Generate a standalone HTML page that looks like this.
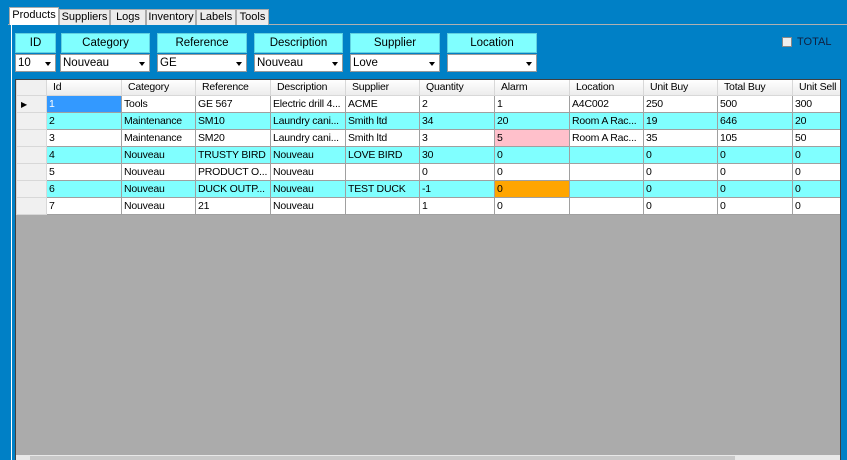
<!DOCTYPE html><html><head><style>
*{box-sizing:border-box;margin:0;padding:0}
body{width:847px;height:460px;background:#0080c6;font-family:"Liberation Sans",sans-serif;font-size:11px;position:relative;overflow:hidden;color:#000}
.a{position:absolute}
.tab{position:absolute;top:9px;height:16px;background:#ececec;border:1px solid #aaa;border-bottom:none;text-align:center;line-height:15px;font-size:11px}
.lbl{position:absolute;top:33px;height:20px;background:#80ffff;border:1px solid #60d0e0;text-align:center;line-height:19px;font-size:11.5px}
.cmb{position:absolute;top:54px;height:18px;background:#fff;border:1px solid #999;line-height:16px;padding-left:2px;font-size:11.5px}
.cmb:after{content:"";position:absolute;right:4px;top:7px;border:3.5px solid transparent;border-top:4px solid #000}
.wrap{position:absolute;left:16px;top:80px;width:824px;overflow:hidden}
table{border-collapse:collapse;table-layout:fixed;width:824px}
td{height:17px;border:1px solid #a0a0a0;padding:0 2px;white-space:nowrap;overflow:hidden;font-size:10.5px;line-height:15px;letter-spacing:-0.2px}
tr.h td{background:linear-gradient(#fff,#ececec);border-color:#d8d8d8;height:15px;padding-left:6px;border-top:none}
tr.c td{background:#80ffff}
tr td:first-child{background:#f0f0f0;border-color:#d8d8d8}
</style></head><body>
<div class="a" style="left:8px;top:24px;width:839px;height:1px;background:#b0b0b0"></div>
<div class="a" style="left:11px;top:24px;width:1px;height:436px;background:#fff"></div>
<div class="tab" style="left:9px;top:7px;height:18px;width:50px;background:#fff;z-index:2">Products</div>
<div class="tab" style="left:59px;width:51px">Suppliers</div>
<div class="tab" style="left:110px;width:36px">Logs</div>
<div class="tab" style="left:146px;width:50px">Inventory</div>
<div class="tab" style="left:196px;width:40px">Labels</div>
<div class="tab" style="left:236px;width:33px">Tools</div>

<div class="lbl" style="left:15px;width:41px">ID</div>
<div class="lbl" style="left:61px;width:89px">Category</div>
<div class="lbl" style="left:157px;width:90px">Reference</div>
<div class="lbl" style="left:254px;width:89px">Description</div>
<div class="lbl" style="left:350px;width:90px">Supplier</div>
<div class="lbl" style="left:447px;width:90px">Location</div>
<div class="cmb" style="left:15px;width:41px">10</div>
<div class="cmb" style="left:60px;width:90px">Nouveau</div>
<div class="cmb" style="left:157px;width:90px">GE</div>
<div class="cmb" style="left:254px;width:89px">Nouveau</div>
<div class="cmb" style="left:350px;width:90px">Love</div>
<div class="cmb" style="left:447px;width:90px"></div>

<div class="a" style="left:782px;top:37px;width:10px;height:10px;background:#eee;border:1px solid #888"></div>
<div class="a" style="left:797px;top:36px;color:#102040;font-size:11px">TOTAL</div>

<div class="a" style="left:15px;top:79px;width:826px;height:381px;background:#ababab;border:1px solid #404040"></div>
<div class="wrap">
<table>
<colgroup><col style="width:30px"><col style="width:75px"><col style="width:74px"><col style="width:75px"><col style="width:75px"><col style="width:74px"><col style="width:75px"><col style="width:75px"><col style="width:74px"><col style="width:74px"><col style="width:75px"><col style="width:48px"></colgroup>
<tr class="h"><td></td><td>Id</td><td>Category</td><td>Reference</td><td>Description</td><td>Supplier</td><td>Quantity</td><td>Alarm</td><td>Location</td><td>Unit Buy</td><td>Total Buy</td><td>Unit Sell</td></tr>
<tr><td style="font-size:8px;padding-left:4px">▶</td><td style="background:#3399ff;color:#fff">1</td><td style="background:#fff">Tools</td><td style="background:#fff">GE 567</td><td style="background:#fff">Electric drill 4...</td><td style="background:#fff">ACME</td><td style="background:#fff">2</td><td style="background:#fff">1</td><td style="background:#fff">A4C002</td><td style="background:#fff">250</td><td style="background:#fff">500</td><td style="background:#fff">300</td></tr>
<tr class="c"><td></td><td>2</td><td>Maintenance</td><td>SM10</td><td>Laundry cani...</td><td>Smith ltd</td><td>34</td><td>20</td><td>Room A Rac...</td><td>19</td><td>646</td><td>20</td></tr>
<tr style="background:#fff"><td></td><td>3</td><td>Maintenance</td><td>SM20</td><td>Laundry cani...</td><td>Smith ltd</td><td>3</td><td style="background:#ffc0cb">5</td><td>Room A Rac...</td><td>35</td><td>105</td><td>50</td></tr>
<tr class="c"><td></td><td>4</td><td>Nouveau</td><td>TRUSTY BIRD</td><td>Nouveau</td><td>LOVE BIRD</td><td>30</td><td>0</td><td></td><td>0</td><td>0</td><td>0</td></tr>
<tr style="background:#fff"><td></td><td>5</td><td>Nouveau</td><td>PRODUCT O...</td><td>Nouveau</td><td></td><td>0</td><td>0</td><td></td><td>0</td><td>0</td><td>0</td></tr>
<tr class="c"><td></td><td>6</td><td>Nouveau</td><td>DUCK OUTP...</td><td>Nouveau</td><td>TEST DUCK</td><td>-1</td><td style="background:#ffa500">0</td><td></td><td>0</td><td>0</td><td>0</td></tr>
<tr style="background:#fff"><td></td><td>7</td><td>Nouveau</td><td>21</td><td>Nouveau</td><td></td><td>1</td><td>0</td><td></td><td>0</td><td>0</td><td>0</td></tr>
</table>
</div>
<div class="a" style="left:16px;top:455px;width:824px;height:5px;background:#e8e8e8"></div>
<div class="a" style="left:30px;top:456px;width:705px;height:4px;background:#c8c8c8"></div>
</body></html>
